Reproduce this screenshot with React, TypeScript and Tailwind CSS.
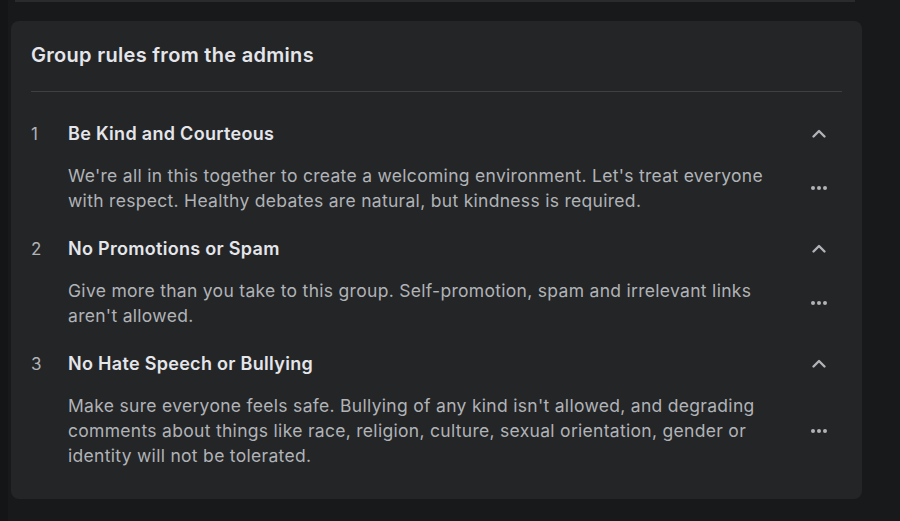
import React from "react"

type Rule = { title: string; body: string }

const rules: Rule[] = [
  {
    title: "Be Kind and Courteous",
    body: "We're all in this together to create a welcoming environment. Let's treat everyone with respect. Healthy debates are natural, but kindness is required.",
  },
  {
    title: "No Promotions or Spam",
    body: "Give more than you take to this group. Self-promotion, spam and irrelevant links aren't allowed.",
  },
  {
    title: "No Hate Speech or Bullying",
    body: "Make sure everyone feels safe. Bullying of any kind isn't allowed, and degrading comments about things like race, religion, culture, sexual orientation, gender or identity will not be tolerated.",
  },
]

const ChevronUp = () => (
  <svg width="16" height="16" viewBox="0 0 16 16" fill="none">
    <path d="M2.5 10.5 8 5l5.5 5.5" stroke="#b0b3b8" strokeWidth="2.4" strokeLinecap="round" strokeLinejoin="round" />
  </svg>
)

const Dots = () => (
  <svg width="18" height="6" viewBox="0 0 18 6">
    <circle cx="3" cy="3" r="2" fill="#b0b3b8" />
    <circle cx="9" cy="3" r="2" fill="#b0b3b8" />
    <circle cx="15" cy="3" r="2" fill="#b0b3b8" />
  </svg>
)

const RuleItem: React.FC<{ index: number; rule: Rule }> = ({ index, rule }) => (
  <div className="flex flex-col">
    <div className="flex items-baseline h-6 leading-6">
      <span className="w-[37px] text-[17px] text-[#b0b3b8]">{index}</span>
      <span className="flex-1 text-[18px] tracking-[0.3px] font-semibold text-[#e4e6eb]">{rule.title}</span>
      <div className="w-9 flex justify-center self-center mr-[5px]">
        <ChevronUp />
      </div>
    </div>
    <div className="flex items-center mt-[17px]">
      <p className="ml-[37px] w-[715px] text-[17.5px] tracking-[0.3px] leading-[25px] text-[#b0b3b8]">{rule.body}</p>
      <div className="flex-1" />
      <div className="w-9 flex justify-center mr-[5px]">
        <Dots />
      </div>
    </div>
  </div>
)

export default function App() {
  return (
    <div
      className="w-[900px] h-[521px] bg-[#18191a] flex overflow-hidden"
      style={{ fontFamily: "Inter, 'Noto Sans', sans-serif" }}
    >
      <div className="w-2 h-full bg-[#141516]" />
      <div className="flex flex-col">
        <div className="ml-[7px] w-[840px] h-[2px] bg-[#2a2b2d]" />
        <div className="ml-[3px] mt-[19px] w-[851px] rounded-lg bg-[#242526] flex flex-col">
          <div className="px-5 pt-[22px] pb-6">
            <h2 className="text-[20px] tracking-[0.3px] leading-6 font-semibold text-[#e4e6eb]">Group rules from the admins</h2>
          </div>
          <div className="mx-5 h-px bg-[#3e4042]" />
          <div className="px-5 pt-[30px] pb-[31px] flex flex-col gap-[24px]">
            {rules.map((rule, i) => (
              <RuleItem key={rule.title} index={i + 1} rule={rule} />
            ))}
          </div>
        </div>
      </div>
    </div>
  )
}
